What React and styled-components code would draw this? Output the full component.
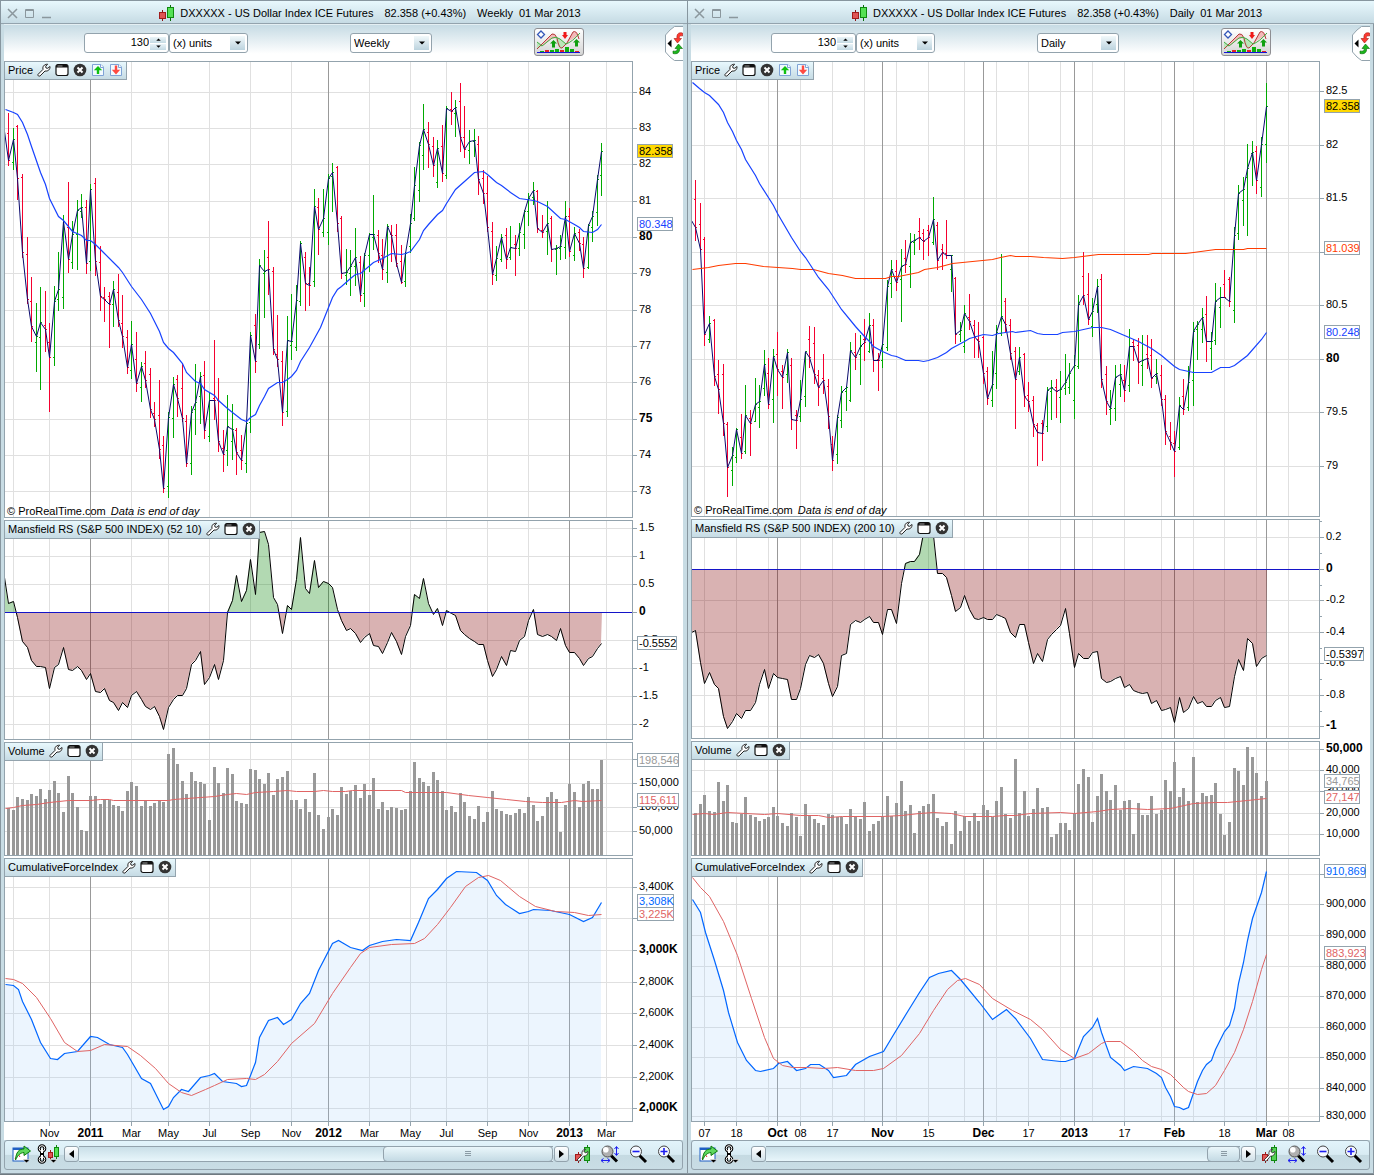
import React, { useState } from 'react';
import styled, { createGlobalStyle, css } from 'styled-components';

const font = '"Liberation Sans", Arial, Helvetica, sans-serif';
const frameDark = '#87969f';
const frameBlue = '#c8dce4';
const lineGrey = '#93a3ad';
const barTop = '#e8f8fd';
const barBottom = '#c6dbe4';
const mainBlue = '#1742ff';
const forceBlue = '#0066ff';
const avgRed = '#e06464';

/* ---------- series, all in window coordinates ---------- */

// high, low, open, close
const weeklyBars = [
  [113,165,133,160],[128,169,162,139],[125,199,126,178],[174,257,177,252],[237,303,254,299],[277,341,301,326],
  [303,371,342,336],[287,389,337,322],[291,351,325,329],[323,411,342,357],[286,365,357,301],[252,310,299,289],
  [215,308,297,221],[182,272,227,259],[221,268,262,234],[200,269,234,210],[194,217,211,207],[200,273,207,263],
  [184,270,261,189],[178,275,183,261],[246,310,262,296],[287,321,297,299],[292,347,296,304],[281,326,304,289],
  [274,326,292,320],[295,347,323,336],[330,373,337,367],[321,378,370,344],[332,391,359,383],[362,401,387,366],
  [351,387,363,380],[368,417,374,409],[402,426,413,419],[380,458,415,449],[436,492,445,488],[412,497,486,417],
  [377,437,418,384],[375,416,379,398],[363,421,388,418],[415,466,421,463],[406,474,463,412],[364,434,409,402],
  [372,423,396,376],[361,438,375,430],[392,441,436,400],[340,419,398,400],[378,451,400,441],[430,471,448,454],
  [395,465,450,426],[404,459,441,429],[428,474,430,452],[435,469,450,460],[421,472,463,423],[332,432,422,335],
  [314,372,325,361],[259,348,344,265],[250,317,273,271],[221,294,257,269],[267,354,271,349],[315,366,354,359],
  [351,425,361,412],[316,416,411,340],[294,359,345,341],[285,350,347,300],[241,305,301,243],[252,310,257,283],
  [267,305,283,285],[189,286,281,206],[198,254,207,229],[189,236,232,218],[174,244,232,178],[163,211,176,172],
  [166,231,167,223],[216,278,218,273],[249,284,275,272],[250,295,273,266],[228,285,266,257],[256,301,262,295],
  [253,306,293,255],[233,271,255,234],[195,249,237,234],[230,262,235,253],[239,279,255,269],[224,282,272,226],
  [225,261,234,235],[224,266,235,263],[245,283,261,282],[252,286,281,253],[214,252,246,223],[167,220,218,185],
  [142,201,190,145],[104,169,155,129],[122,167,132,144],[137,176,146,165],[140,187,182,148],[125,181,146,173],
  [106,178,175,108],[92,124,109,111],[100,136,113,107],[83,151,101,137],[106,157,137,149],[130,163,150,141],
  [129,156,141,140],[136,194,144,179],[170,203,178,193],[176,231,193,227],[222,284,231,274],[246,280,275,258],
  [234,261,259,237],[228,268,235,259],[226,259,257,247],[235,275,244,248],[223,255,248,232],[210,248,234,211],
  [193,225,211,198],[182,204,197,190],[190,232,191,228],[215,237,230,232],[201,254,231,223],[216,261,218,249],
  [245,274,249,248],[235,259,248,246],[201,258,247,216],[208,256,216,251],[227,260,255,233],[229,250,232,243],
  [237,277,244,268],[224,268,267,225],[211,241,227,216],[175,225,212,179],[143,195,175,151],
];

const dailyBars = [
  [180,240,199,227],[203,249,224,249],[237,345,239,334],[316,342,339,323],[319,385,320,376],[360,413,374,389],
  [364,435,374,423],[422,496,424,467],[447,485,470,455],[428,462,457,429],[414,458,437,453],[385,453,451,415],
  [410,455,418,423],[378,421,421,404],[385,427,407,401],[350,395,388,364],[358,408,373,404],[349,422,399,356],
  [332,395,354,369],[365,408,371,377],[349,382,374,352],[358,429,365,419],[410,448,415,420],[380,421,416,399],
  [352,406,396,351],[326,367,339,357],[327,383,343,374],[370,405,375,387],[354,393,378,380],[379,428,386,416],
  [436,470,444,460],[415,463,454,417],[386,427,420,392],[386,410,391,387],[342,401,400,350],[333,369,352,357],
  [335,384,354,346],[319,360,339,342],[313,352,351,325],[319,371,325,360],[353,390,359,360],[344,367,360,344],
  [280,350,347,286],[260,297,283,269],[260,290,271,282],[249,321,279,266],[240,272,258,264],[233,287,266,242],
  [234,254,242,240],[218,249,231,237],[229,259,233,241],[225,255,230,237],[197,244,242,219],[222,269,225,260],
  [244,269,249,252],[220,258,253,255],[255,291,269,255],[277,343,278,334],[322,341,334,330],[305,352,346,313],
  [294,329,317,321],[320,357,325,336],[322,357,339,341],[336,383,337,373],[367,404,371,398],[351,406,400,384],
  [325,388,373,332],[254,335,333,316],[298,332,301,324],[319,359,325,353],[347,428,351,379],[347,374,371,357],
  [353,406,354,396],[382,411,395,401],[396,436,400,424],[423,465,425,432],[420,460,423,433],[387,431,426,390],
  [380,419,391,387],[379,417,387,391],[371,422,397,389],[354,394,388,382],[363,393,387,373],[355,418,400,365],
  [295,368,366,304],[252,304,276,295],[273,324,294,319],[298,336,326,311],[279,312,304,286],[274,387,279,379],
  [366,414,374,401],[390,424,409,408],[365,420,408,377],[364,396,384,374],[365,401,380,390],[329,391,385,346],
  [339,360,342,346],[338,383,345,362],[335,385,365,360],[335,368,354,358],[339,387,355,378],[359,383,376,373],
  [365,405,375,399],[395,444,399,431],[422,449,436,442],[431,476,443,451],[397,449,447,405],[379,414,396,409],
  [366,410,407,382],[322,405,380,331],[321,359,329,324],[308,342,329,317],[296,361,314,341],[332,369,348,341],
  [283,344,340,301],[287,327,307,297],[270,297,284,297],[277,306,279,301],[227,322,310,235],[185,239,233,193],
  [177,225,200,189],[144,235,177,168],[141,185,153,152],[146,193,151,180],[137,196,187,144],[83,162,144,106],
];

// relative strength: one sample per bar, the first lies just left of bar 0
const weeklyRs = [
  577,603,601,617,641,647,660,666,666,667,688,667,664,647,669,670,666,670,679,673,691,692,688,700,702,710,702,
  707,695,691,699,706,709,706,716,729,707,699,695,695,688,664,660,651,684,677,664,679,660,612,600,575,601,590,
  559,594,532,531,544,597,604,633,605,609,579,537,588,593,560,587,581,583,587,609,620,630,628,633,642,637,633,
  645,646,653,642,632,641,654,636,625,594,598,578,603,614,608,625,610,613,615,630,634,638,641,644,644,660,676,
  669,656,665,650,651,640,636,620,609,634,636,634,636,640,628,645,652,652,658,665,658,656,648,643,
];

const dailyRs = [
  632,630,662,683,672,684,688,716,728,721,713,718,710,710,702,684,669,688,673,677,678,679,699,699,688,664,655,
  657,654,663,683,696,686,655,653,624,620,622,619,616,622,622,634,609,609,623,583,563,561,561,554,533,523,535,
  573,573,577,595,611,607,595,609,618,619,617,619,619,614,616,618,632,637,624,624,642,663,653,661,639,634,629,
  625,608,633,667,653,658,658,652,651,678,682,681,678,676,687,684,690,692,693,692,703,700,710,709,707,722,697,
  712,708,696,703,701,706,706,700,697,707,706,676,659,670,638,643,666,658,655,
];

// top edge of each volume column
const weeklyVolume = [
  808,810,797,799,800,794,796,789,799,790,781,793,812,776,793,807,830,831,796,796,804,799,800,805,806,811,791,
  782,786,806,801,806,803,801,802,754,748,764,781,794,772,781,782,784,820,767,783,793,768,774,801,803,804,769,
  770,779,784,773,795,779,777,771,800,800,809,799,812,773,815,829,817,809,815,787,794,791,785,798,784,795,778,
  809,802,810,807,808,810,809,791,762,778,782,786,772,780,791,810,806,812,793,802,816,819,806,822,812,791,809,
  811,814,815,813,809,813,797,805,821,816,797,792,799,832,805,784,792,807,784,781,789,789,760,
];

const dailyVolume = [
  813,804,795,811,812,782,801,785,822,823,814,797,815,817,821,819,817,807,816,823,826,813,817,836,804,816,819,
  823,825,814,815,817,817,824,809,817,819,802,831,824,821,817,796,816,803,781,811,805,833,811,806,804,794,818,
  826,822,844,811,831,816,821,813,821,805,810,817,801,787,814,818,759,813,791,816,809,788,808,807,837,834,823,
  823,830,814,784,769,777,822,796,774,791,800,785,810,801,800,834,803,815,815,796,814,810,780,791,762,797,788,
  801,757,802,793,796,795,783,814,835,822,768,771,785,747,757,773,796,781,
];

const weeklyAverage = '5,109 13,112 17,114 22,122 27,134 31,146 40,172 45,184 49,198 58,216 63,220 72,231 81,235 86,240 90,240 95,244 100,249 104,253 113,262 118,267 122,272 131,286 141,299 150,313 159,331 163,342 168,348 173,352 182,363 186,372 195,381 200,383 204,389 214,395 218,400 227,408 232,412 241,419 246,421 250,417 255,414 259,405 264,396 268,388 277,382 282,382 287,379 291,376 296,370 300,361 309,347 320,327 328,307 332,297 337,289 341,286 350,278 355,274 360,273 373,262 382,258 391,253 401,254 405,253 410,251 419,239 423,230 428,224 437,214 442,210 446,203 455,189 464,181 474,172 483,171 487,174 496,182 501,185 510,192 519,198 533,200 537,201 547,206 560,218 565,219 574,224 579,227 583,231 592,232 597,229 601,224';
const dailyAverage = '5,82 12,88 17,92 22,95 31,104 36,112 40,122 45,131 49,140 54,149 58,159 68,175 72,183 86,205 90,213 104,237 113,251 118,257 131,277 141,289 154,309 168,326 177,336 182,341 186,346 195,351 204,355 209,356 218,360 231,360 236,361 241,360 250,357 259,352 264,348 277,341 282,338 296,334 305,335 311,333 325,331 328,332 343,330 350,333 356,334 370,334 375,332 387,331 405,327 414,327 423,329 437,335 451,341 464,348 474,355 487,366 492,369 506,372 524,372 533,367 542,367 547,365 560,355 574,339 579,332';
const dailyLongAverage = '5,269 21,267 31,265 48,263 58,263 76,266 105,268 113,269 126,269 141,273 155,275 168,278 198,278 204,276 211,276 231,272 237,269 250,267 265,263 285,261 305,259 313,257 323,255 328,256 343,256 356,257 375,258 387,257 411,254 461,254 465,253 498,253 506,252 528,249 556,249 560,248 579,248';

const weeklyVolumeAverage = '5,808 13,807 22,805 36,804 49,802 68,800 90,800 100,799 109,799 113,800 168,800 173,799 200,797 214,796 227,794 236,793 246,794 255,792 273,791 287,790 296,791 314,791 323,790 332,791 345,791 352,790 401,790 405,792 446,792 468,795 487,797 506,799 525,801 542,802 561,802 574,800 582,801 601,800';
const dailyVolumeAverage = '5,814 17,813 26,814 40,812 58,813 77,814 90,813 113,815 131,815 141,817 155,816 178,816 195,816 214,815 232,813 246,812 264,813 277,816 305,816 318,815 328,815 343,813 373,812 387,813 410,811 423,809 442,808 460,809 483,808 506,803 528,802 540,802 560,800 579,798';

const weeklyForce = '5,984 13,985 18,989 22,1001 31,1019 40,1042 50,1058 57,1059 64,1053 77,1051 90,1036 97,1037 109,1044 122,1047 127,1054 141,1078 150,1083 163,1109 168,1106 173,1097 181,1089 188,1091 200,1077 209,1075 214,1073 222,1081 236,1083 241,1086 246,1085 250,1075 255,1062 259,1037 268,1020 277,1017 283,1024 291,1019 300,1003 309,993 318,970 332,943 338,940 350,947 362,950 369,945 382,941 396,939 410,940 418,922 428,898 437,889 446,878 456,871 476,872 487,880 496,895 505,904 519,913 528,911 533,909 550,910 569,914 583,921 592,917 601,902';
const weeklyForceAverage = '5,978 13,979 22,983 36,997 50,1018 64,1042 77,1051 90,1050 104,1044 127,1046 140,1055 155,1068 168,1083 181,1092 191,1095 205,1089 214,1085 227,1079 246,1078 255,1079 264,1074 277,1061 291,1043 314,1023 332,993 350,967 360,953 369,947 391,944 414,943 424,938 437,924 450,907 465,886 478,877 488,875 500,880 519,896 535,906 555,911 574,912 588,915 601,914';
const dailyForce = '5,899 13,912 18,932 27,960 36,990 41,1012 50,1042 59,1060 68,1070 73,1071 86,1068 91,1063 100,1061 109,1070 118,1068 123,1064 132,1064 141,1070 146,1077 159,1075 168,1064 182,1056 196,1051 205,1036 219,1013 232,992 242,977 251,973 264,970 273,979 292,1002 305,1019 319,1009 328,1018 343,1038 355,1059 373,1061 378,1061 387,1058 396,1036 405,1027 410,1018 414,1032 423,1057 433,1065 437,1070 446,1066 460,1068 469,1073 474,1077 478,1087 483,1096 487,1106 492,1107 496,1109 501,1107 510,1081 515,1070 519,1064 524,1060 528,1049 537,1031 542,1025 547,1008 551,983 556,962 560,940 565,918 574,892 579,871';
const dailyForceAverage = '5,877 13,887 22,896 36,921 50,955 64,998 77,1037 86,1058 95,1065 105,1067 120,1067 136,1068 150,1067 168,1070 186,1070 196,1068 214,1055 232,1033 246,1010 260,989 270,980 278,978 292,984 305,998 325,1010 343,1019 355,1029 373,1049 387,1058 401,1053 414,1043 419,1041 433,1041 446,1051 455,1060 464,1066 474,1069 483,1074 496,1087 501,1091 510,1094 519,1093 528,1085 537,1070 547,1052 556,1029 565,1001 574,969 579,954';

const weekly = {
  id: 'weekly',
  period: 'Weekly',
  thumb: 170,
  grid: [13, 49, 131, 168, 209, 250, 291, 369, 410, 446, 487, 528, 606],
  majorGrid: [90, 328, 569],
  dates: [[49, 'Nov'], [90, '2011', true], [131, 'Mar'], [168, 'May'], [209, 'Jul'], [250, 'Sep'], [291, 'Nov'], [328, '2012', true], [369, 'Mar'], [410, 'May'], [446, 'Jul'], [487, 'Sep'], [528, 'Nov'], [569, '2013', true], [606, 'Mar']],
  panels: [
    {
      type: 'price', title: 'Price', top: 61, height: 457, bars: weeklyBars, firstClose: 131,
      averages: [[weeklyAverage, mainBlue]],
      ticks: [[92, '84'], [128, '83'], [164, '82'], [201, '81'], [237, '80', true], [273, '79'], [310, '78'], [346, '77'], [382, '76'], [419, '75', true], [455, '74'], [491, '73']],
      tags: [[144, '82.358', '#000', 36, '#ffd800'], [217, '80.348', mainBlue, 36]],
    },
    {
      type: 'strength', title: 'Mansfield RS (S&P 500 INDEX) (52 10)', top: 520, height: 220, zero: 612, series: weeklyRs,
      ticks: [[528, '1.5'], [556, '1'], [584, '0.5'], [612, '0', true], [640, '-0.5'], [668, '-1'], [696, '-1.5'], [724, '-2']],
      tags: [[636, '-0.5552', '#000', 40]],
    },
    {
      type: 'volume', title: 'Volume', top: 742, height: 114, series: weeklyVolume, averages: [[weeklyVolumeAverage, avgRed]],
      ticks: [[759], [783, '150,000'], [807, '100,000'], [831, '50,000']],
      tags: [[753, '198,546', '#999', 42], [793, '115,611', avgRed, 42]],
    },
    {
      type: 'force', title: 'CumulativeForceIndex', top: 858, height: 264, series: weeklyForce, averages: [[weeklyForceAverage, avgRed]],
      ticks: [[887, '3,400K'], [918], [950, '3,000K', true], [982, '2,800K'], [1013, '2,600K'], [1045, '2,400K'], [1077, '2,200K'], [1108, '2,000K', true]],
      tags: [[907, '3,225K', avgRed, 37], [894, '3,308K', forceBlue, 37]],
    },
  ],
};

const daily = {
  id: 'daily',
  period: 'Daily',
  thumb: 33,
  grid: [17, 49, 81, 113, 145, 177, 209, 241, 277, 309, 341, 373, 405, 437, 474, 506, 537, 569, 601],
  majorGrid: [90, 195, 296, 387, 487, 579],
  dates: [[17, '07'], [49, '18'], [90, 'Oct', true], [113, '08'], [145, '17'], [195, 'Nov', true], [241, '15'], [296, 'Dec', true], [341, '17'], [387, '2013', true], [437, '17'], [487, 'Feb', true], [537, '18'], [579, 'Mar', true], [601, '08']],
  panels: [
    {
      type: 'price', title: 'Price', top: 61, height: 456, bars: dailyBars, firstClose: 220,
      averages: [[dailyLongAverage, '#ff3c00'], [dailyAverage, mainBlue]],
      ticks: [[91, '82.5'], [145, '82'], [198, '81.5'], [252], [305, '80.5'], [359, '80', true], [412, '79.5'], [466, '79']],
      tags: [[99, '82.358', '#000', 36, '#ffd800'], [241, '81.039', '#ff3c00', 36], [325, '80.248', mainBlue, 36]],
    },
    {
      type: 'strength', title: 'Mansfield RS (S&P 500 INDEX) (200 10)', top: 519, height: 220, zero: 569, series: dailyRs,
      ticks: [[537, '0.2'], [569, '0', true], [600, '-0.2'], [632, '-0.4'], [663, '-0.6'], [695, '-0.8'], [726, '-1', true]],
      minorTicks: [521, 553, 585, 616, 648, 679, 711],
      tags: [[647, '-0.5397', '#000', 40]],
    },
    {
      type: 'volume', title: 'Volume', top: 741, height: 115, series: dailyVolume, averages: [[dailyVolumeAverage, avgRed]],
      ticks: [[749, '50,000', true], [770, '40,000'], [791, '30,000'], [813, '20,000'], [834, '10,000']],
      tags: [[774, '34,765', '#999', 36], [790, '27,147', avgRed, 36]],
    },
    {
      type: 'force', title: 'CumulativeForceIndex', top: 858, height: 264, series: dailyForce, averages: [[dailyForceAverage, avgRed]],
      ticks: [[874], [904, '900,000'], [935, '890,000'], [966, '880,000'], [996, '870,000'], [1027, '860,000'], [1057, '850,000'], [1088, '840,000'], [1116, '830,000']],
      tags: [[864, '910,869', forceBlue, 42], [946, '883,923', avgRed, 42]],
    },
  ],
};

const barX = (i) => Math.floor(8.8 + 4.5617 * i);

/* ---------- styles ---------- */

const GlobalStyle = createGlobalStyle`
  * {
    box-sizing: border-box;
  }
  body {
    margin: 0;
    background: #6f7a80;
    color: #000;
    font-family: ${font};
    font-size: 11px;
  }
  button, input, select {
    font: inherit;
    color: inherit;
  }
`;

const Desktop = styled.main`
  display: flex;
  align-items: flex-start;
  padding-bottom: 1px;
`;

const Frame = styled.section`
  background: ${frameBlue};
  border: 1px solid ${frameDark};
  border-right-width: ${(p) => (p.$last ? '1px' : '0')};
  display: flex;
  flex: 1 1 0;
  flex-direction: column;
  min-width: 600px;
  padding: 0 ${(p) => (p.$last ? '3px' : '4px')} 3px 3px;
`;

const TitleBar = styled.header`
  align-items: center;
  background: linear-gradient(${barTop}, ${barBottom});
  border-bottom: 1px solid ${lineGrey};
  display: flex;
  height: 23px;
  margin: 0 -4px 0 -3px;
  padding: 2px 0 0 6px;
`;

const WindowButtons = styled.div`
  display: flex;
  gap: 6px;
  width: 46px;
`;

const PlainButton = styled.button`
  background: none;
  border: 0;
  cursor: pointer;
  display: block;
  line-height: 0;
  padding: 0;
`;

const Title = styled.h1`
  align-items: center;
  display: flex;
  flex: 1;
  font-size: 11px;
  font-weight: normal;
  gap: 11px;
  justify-content: center;
  margin: 0;
  white-space: nowrap;

  .name, .when {
    align-items: center;
    display: flex;
    gap: 5px;
  }
  .when {
    gap: 6px;
  }
`;

const Toolbar = styled.div`
  align-items: center;
  background: linear-gradient(#c6dbe4, #fff 80%);
  border-top: 1px solid #e4eff3;
  display: flex;
  height: 37px;
  padding-left: 80px;
`;

const fieldBox = css`
  background: #fff;
  border: 1px solid ${lineGrey};
  border-radius: 3px;
  height: 20px;
`;

const UnitField = styled.label`
  ${fieldBox}
  align-items: center;
  display: flex;
  padding-right: 2px;
  width: 85px;

  input {
    appearance: textfield;
    background: none;
    border: 0;
    flex: 1;
    height: 18px;
    min-width: 0;
    outline: 0;
    padding: 0 1px 2px 0;
    text-align: right;
  }
  input::-webkit-inner-spin-button {
    appearance: none;
    margin: 0;
  }
`;

const Spinner = styled.span`
  display: flex;
  flex-direction: column;
  gap: 1px;

  button {
    background: linear-gradient(#eaf4f8, #c3d9e3);
    height: 6px;
    width: 16px;
  }
  svg {
    display: block;
    margin: auto;
  }
`;

const SelectBox = styled.label`
  ${fieldBox}
  align-items: center;
  display: flex;
  margin-left: ${(p) => p.$gap || 0}px;
  position: relative;
  width: ${(p) => p.$width}px;

  select {
    appearance: none;
    background: none;
    border: 0;
    height: 18px;
    outline: 0;
    padding: 0 0 1px 3px;
    width: 100%;
  }
  span {
    align-items: center;
    background: linear-gradient(#f2f9fb, #bcd3de);
    display: flex;
    height: 14px;
    justify-content: center;
    pointer-events: none;
    position: absolute;
    right: 2px;
    width: 15px;
  }
`;

const IndicatorButton = styled(PlainButton)`
  background: linear-gradient(#fff, #d4d4d4);
  border: 1px solid #8e8e92;
  border-radius: 3px;
  height: 28px;
  margin: 0 0 2px 102px;
  padding: 0 1px;
  width: 50px;
`;

const DrawerTab = styled(PlainButton)`
  margin-left: auto;
`;

const Charts = styled.div`
  background: #fff;
  display: flex;
  flex-direction: column;
  gap: 2px;
`;

const PanelRow = styled.div`
  display: flex;
  height: ${(p) => p.$height}px;
`;

const Plot = styled.div`
  border: 1px solid ${lineGrey};
  flex: 1;
  min-width: 0;
  position: relative;

  > svg {
    display: block;
    height: 100%;
    width: 100%;
  }
`;

const AxisSvg = styled.svg`
  display: block;
  flex: none;
  overflow: visible;
`;

const PanelHeader = styled.div`
  align-items: center;
  background: linear-gradient(${barTop}, ${barBottom});
  border-bottom: 1px solid ${lineGrey};
  border-right: 1px solid ${lineGrey};
  display: flex;
  gap: 4px;
  height: 18px;
  left: 0;
  padding: 0 3px 1px;
  position: absolute;
  top: 0;
  white-space: nowrap;
`;

const Credit = styled.p`
  bottom: 0;
  left: 2px;
  margin: 0;
  position: absolute;

  em {
    margin-left: 2px;
  }
`;

const DateRow = styled.div`
  background: #fff;
  height: 18px;
  padding: 0 51px 0 1px;

  svg {
    display: block;
    overflow: visible;
  }
`;

const BottomBar = styled.footer`
  align-items: center;
  background: linear-gradient(#e2f4fb, #d8ebf3 48%, #c5dae2 50%, #c9dde5);
  border: 1px solid ${lineGrey};
  border-radius: 3px;
  display: flex;
  height: 30px;
  padding: 0 7px 2px;
`;

const ScrollButton = styled(PlainButton)`
  align-items: center;
  background: linear-gradient(#fff, #cfe0e8);
  border: 1px solid ${lineGrey};
  border-radius: 3px;
  display: flex;
  height: 16px;
  justify-content: center;
  width: 15px;
`;

const ScrollTrack = styled.div`
  background: linear-gradient(#c9dfe8, #e8f6fb);
  border: 1px solid ${lineGrey};
  border-width: 1px 0;
  display: flex;
  flex: 1;
  height: 16px;
  justify-content: flex-end;
  margin-right: 1px;
`;

const ScrollThumb = styled.button`
  align-items: center;
  background: linear-gradient(#eaf7fb, #c4dae4);
  border: 1px solid ${lineGrey};
  border-radius: 4px;
  display: flex;
  height: 16px;
  justify-content: center;
  margin: -1px 0;
  padding: 0;
  width: ${(p) => p.$width}px;
`;

const ToolGroup = styled.div`
  align-items: center;
  display: flex;
  gap: ${(p) => p.$gap}px;
  margin: ${(p) => p.$margin};
`;

/* ---------- icons ---------- */

const Caret = ({ up, small }) => (
  <svg width={small ? 5 : 6} height={small ? 3 : 4} viewBox="0 0 6 4">
    <path d={up ? 'M0 3.5h6L3 .5z' : 'M0 .5h6L3 3.5z'} fill="#000" />
  </svg>
);

const Candles = () => (
  <svg width="16" height="16" viewBox="0 0 16 16">
    <path d="M3.5 5v11" stroke="#8c1414" />
    <rect x=".5" y="7.5" width="6" height="6" fill="#e05555" stroke="#a01c1c" />
    <path d="M11.500 0v16" stroke="#0a6b0a" />
    <rect x="8.500" y="2.500" width="6" height="10" fill="#55e055" stroke="#0f8a0f" />
  </svg>
);

const Wrench = () => (
  <svg width="14" height="14" viewBox="0 0 14 14">
    <path
      d="M1 11.400 6 6.400C5.400 4.400 6.300 1.800 9.400 1.300L10.600 1.200 8.700 3.300 9 5 10.700 5.300 13 3.500C13.300 6.200 11.200 8.600 8 8L3.100 12.900C1.900 13.700.3 12.500 1 11.400Z"
      fill="#fff" stroke="#222" strokeLinejoin="round"
    />
  </svg>
);

const Maximise = () => (
  <svg width="14" height="14" viewBox="0 0 14 14">
    <rect x="1" y="1.500" width="12" height="11" rx="2" fill="#fff" stroke="#111" strokeWidth="1.200" />
    <path d="M1 4.500V3.500Q1 1.500 3 1.500H11Q13 1.500 13 3.500V4.500Z" fill="#111" />
    <path d="M2.500 3h5" stroke="#999" />
  </svg>
);

const Close = () => (
  <svg width="14" height="14" viewBox="0 0 14 14">
    <circle cx="7" cy="7" r="6.300" fill="#333" />
    <path d="M4.500 4.500l5 5M9.500 4.500l-5 5" stroke="#fff" strokeWidth="2" />
  </svg>
);

const MoveIcon = ({ down }) => (
  <svg width="14" height="14" viewBox="0 0 14 14">
    <path d="M1.500 1.500H10L12.500 4V12.500H1.500Z" fill="#f2faff" stroke="#7fa3d6" />
    <path d="M9.500 1.500V4.500H12.500" fill="#fff" stroke="#7fa3d6" />
    {down
      ? <path d="M5.800 2.500h2.400v4.300h3L7 11.500 2.800 6.800h3z" fill="#ff4a42" />
      : <path d="M7 3l4.200 4.200h-3V11H5.800V7.200h-3z" fill="#10c010" />}
  </svg>
);

const IndicatorIcon = () => (
  <svg width="46" height="26" viewBox="0 0 46 26">
    <path d="M4 18L16 5Q19 4 21 9L15 10L8 16ZM30 14L37 3Q40 1 43 7L38 9Z" fill="#f2b9b9" />
    <path d="M1 13V20L6 17ZM19 8L24 10 30 15 25 20Q22 19 19 8Z" fill="#b9e6b9" />
    <path d="M1 20L16 5Q19 4 21 9Q23 20 26 19L31 14 37 3Q40 1 42 7L43 10" fill="none" stroke="#b53a3a" />
    <path d="M1 13L6 17 16 9Q20 7 24 10L30 15Q36 13 44 4" fill="none" stroke="#3fae3f" />
    <path d="M5 2l3.500 3.500L5 9 1.500 5.500z" fill="#fff" stroke="#3457b8" strokeWidth="1.300" />
    <path d="M27.500 3h3v3h1.500l-3 4-3-4h1.500z" fill="#f01818" />
    <path d="M17.500 11l3.500 3.500h-2v4h-3v-4h-2zM40.500 10l3.500 3.500h-2v4h-3v-4h-2z" fill="#0fa00f" />
    <path d="M4 23h4v-1H4zM14 23h4v-2h-4zM19 23h4v-3h-4zM29 23h4v-5h-4zM34 23h4v-3h-4z" fill="#0fb00f" />
    <path d="M9 23h4v-2H9zM24 23h4v-2h-4zM39 23h4v-1h-4z" fill="#e02424" />
    <path d="M1 23.500h43" stroke="#1414d8" />
  </svg>
);

const DrawerIcon = () => (
  <svg width="18" height="35" viewBox="0 0 18 35">
    <path d="M18 .5H9.500L5 4 .5 9V26L5 31 9.500 34.500H18" fill="#fff" stroke={lineGrey} />
    <path d="M6.500 13.500v8L2.500 17.500z" fill="#000" />
    <path d="M17.500 7C13 6 11.500 8.500 12 12.500H9L12.500 17 16.500 12.500H14.300C14 10 15 9.500 17.500 10Z" fill="#ff3a30" stroke="#a31a14" strokeWidth=".6" />
    <path d="M8 27.500C12.500 28.500 15 26.500 14.500 22.500H17.500L13.500 18 10 22.500H12.200C12.500 25 11 25.500 8 25Z" fill="#1cb81c" stroke="#0a650a" strokeWidth=".6" />
  </svg>
);

const ShareIcon = () => (
  <svg width="19" height="20" viewBox="0 0 19 20">
    <rect x="1" y="4" width="15" height="13" fill="#fff" stroke="#1f5fc4" />
    <path d="M1 4h15v2H1z" fill="#1f5fc4" />
    <path d="M3 15l3-5 2 3" fill="none" stroke="#d93030" />
    <path d="M3.500 16C4 8 7 5 12 5V2L18.500 7 12 11.500V8.500C8 9 6 11 3.500 16Z" fill="#5fd85f" stroke="#0f7d0f" />
    <path d="M11 15.500h7l-3.500 3.500z" fill="#000" stroke="#fff" strokeWidth=".6" />
  </svg>
);

const ChainShape = () => (
  <g fill="none">
    <g stroke="#000" strokeWidth="3">
      <circle cx="5" cy="4.500" r="2.800" />
      <circle cx="5" cy="15.500" r="2.800" />
      <path d="M5 5v10" strokeWidth="4" />
    </g>
    <g stroke="#fff">
      <circle cx="5" cy="4.500" r="2.800" />
      <circle cx="5" cy="15.500" r="2.800" />
      <path d="M5 5v10" strokeWidth="2" strokeDasharray="4 2" />
    </g>
  </g>
);

const LinkIcon = ({ candles }) => (
  <svg width={candles ? 23 : 16} height="20" viewBox={candles ? '0 0 23 20' : '0 0 16 20'}>
    <ChainShape />
    {candles && (
      <g>
        <path d="M13.500 6v10" stroke="#a01c1c" />
        <rect x="11.500" y="8.500" width="4" height="5" fill="#e05555" stroke="#a01c1c" />
        <path d="M19.500 1v14" stroke="#0f8a0f" />
        <rect x="17.500" y="3.500" width="4" height="9" fill="#55e055" stroke="#0f8a0f" />
      </g>
    )}
    <path d={candles ? 'M13 15.500h7l-3.500 3.500z' : 'M8 15.500h7l-3.500 3.500z'} fill="#000" stroke="#fff" strokeWidth=".6" />
  </svg>
);

const SettingsIcon = () => (
  <svg width="16" height="20" viewBox="0 0 16 20">
    <path d="M12.500 1v18" stroke="#0f8a0f" />
    <rect x="9.500" y="3.500" width="5" height="13" fill="#55d055" stroke="#0f8a0f" />
    <path d="M3.500 8v11" stroke="#a01c1c" />
    <rect x=".5" y="10.500" width="5" height="6" fill="#e05555" stroke="#a01c1c" />
    <path d="M2 16L7 11C6.500 8 7.500 5.500 10.500 5L9 7.500 10.500 9 13 7.500C13 10.500 11 12.500 8.500 12L4 17.500Z" fill="#fff" stroke="#222" strokeWidth=".8" />
  </svg>
);

const ZoomIcon = ({ sign }) => (
  <svg width="19" height="20" viewBox="0 0 19 20">
    <path d="M10.500 11.500L17 18" stroke="#000" strokeWidth="3" />
    <circle cx="7" cy="7.500" r="5.500" fill="#f4f8ff" stroke="#444" />
    <path d={sign === 'in' ? 'M3.500 7.500h7M7 4v7' : 'M3.500 7.500h7'} stroke="#1c1cf0" strokeWidth="1.600" />
  </svg>
);

const FitIcon = () => (
  <svg width="20" height="20" viewBox="0 0 20 20">
    <path d="M10.500 11l6.500 6.500" stroke="#000" strokeWidth="3" />
    <circle cx="7.500" cy="7.500" r="5.500" fill="#b0b0b0" stroke="#555" />
    <circle cx="5.800" cy="5.800" r="2.800" fill="#fff" />
    <path d="M16.500 3v8M14.500 5l2-2.500 2 2.500M14.500 9l2 2.500 2-2.500M1.500 16.500h8M3.500 14.500l-2.500 2 2.500 2M7.500 14.500l2.500 2-2.500 2" fill="none" stroke="#1c1cf0" />
  </svg>
);

/* ---------- chart drawing ---------- */

const Grid = ({ chart, panel }) => {
  const { top, height } = panel;
  return (
    <g shapeRendering="crispEdges">
      {panel.ticks.map(([y]) => <path key={y} d={`M5 ${y + 0.5}H632`} stroke="#e0e0e0" />)}
      {chart.grid.map((x) => <path key={x} d={`M${x + 0.5} ${top}v${height}`} stroke="#e0e0e0" />)}
      {chart.majorGrid.map((x) => <path key={x} d={`M${x + 0.5} ${top}v${height}`} stroke="#999" />)}
    </g>
  );
};

const Line = ({ points, color, width = 1 }) => (
  <polyline points={points} fill="none" stroke={color} strokeWidth={width} transform="translate(0.5 0.5)" vectorEffect="non-scaling-stroke" />
);

const PriceSeries = ({ panel }) => {
  const closes = panel.bars.map(([, , , c], i) => `${barX(i)},${c}`).join(' ');
  const draw = (up) => panel.bars
    .map(([h, l, o, c], i) => {
      if ((c <= o) !== up) return '';
      const x = barX(i);
      return `M${x} ${h}h1V${l + 1}h-1zM${x - 1} ${o}h1v1h-1zM${x + 1} ${c}h1v1h-1z`;
    })
    .join('');
  return (
    <g>
      <g shapeRendering="crispEdges">
        <path d={draw(true)} fill="#00aa00" />
        <path d={draw(false)} fill="#f5002f" />
      </g>
      <Line points={`4,${panel.firstClose} ${closes}`} color="#0a0a6e" />
      {panel.averages.map(([points, color]) => <Line key={color} points={points} color={color} width={1.2} />)}
    </g>
  );
};

const StrengthSeries = ({ chart, panel }) => {
  const points = panel.series.map((y, i) => `${barX(i - 1)},${y}`).join(' ');
  const lastX = barX(panel.series.length - 2) + 1;
  const area = `${barX(-1)},${panel.zero} ${points} ${lastX},${panel.zero}`;
  const bottom = panel.top + panel.height;
  return (
    <g>
      <clipPath id={`${chart.id}-above`}><rect x="0" y={panel.top} width="632" height={panel.zero - panel.top} /></clipPath>
      <clipPath id={`${chart.id}-below`}><rect x="0" y={panel.zero} width="632" height={bottom - panel.zero} /></clipPath>
      <polygon points={area} fill="#008000" fillOpacity=".3" clipPath={`url(#${chart.id}-above)`} />
      <polygon points={area} fill="#800000" fillOpacity=".3" clipPath={`url(#${chart.id}-below)`} />
      <Line points={points} color="#000" />
      <path d={`M5 ${panel.zero + 0.5}H632`} stroke="#1414c8" shapeRendering="crispEdges" />
    </g>
  );
};

const VolumeSeries = ({ panel }) => (
  <g>
    <path
      d={panel.series.map((y, i) => `M${barX(i) - 1} ${y}h3V856h-3z`).join('')}
      fill="#999"
      shapeRendering="crispEdges"
    />
    {panel.averages.map(([points, color]) => <Line key={color} points={points} color={color} />)}
  </g>
);

const ForceSeries = ({ panel }) => {
  const lastX = panel.series.split(' ').pop().split(',')[0];
  return (
    <g>
      <polygon points={`5,1122 ${panel.series} ${lastX},1122`} fill="#9fcff8" fillOpacity=".2" />
      <Line points={panel.series} color={forceBlue} width={1.2} />
      {panel.averages.map(([points, color]) => <Line key={color} points={points} color={color} />)}
    </g>
  );
};

const seriesTypes = {
  price: PriceSeries,
  strength: StrengthSeries,
  volume: VolumeSeries,
  force: ForceSeries,
};

const Axis = ({ panel }) => (
  <AxisSvg width="50" height={panel.height} viewBox={`633 ${panel.top} 50 ${panel.height}`}>
    {panel.ticks.map(([y, label, strong]) => (
      <g key={y}>
        <path d={`M633 ${y + 0.5}h4`} stroke={lineGrey} />
        {label && <text x="639" y={y + 3} fontSize={strong ? 12 : 11} fontWeight={strong ? 'bold' : 'normal'}>{label}</text>}
      </g>
    ))}
    {(panel.minorTicks || []).map((y) => <path key={y} d={`M633 ${y + 0.5}h2`} stroke={lineGrey} />)}
    {panel.tags.map(([y, label, color, width, fill]) => (
      <g key={label}>
        <rect x="637.500" y={y + 0.5} width={width - 1} height="13" fill={fill || '#fff'} stroke={lineGrey} />
        <text x="639" y={y + 11} fontSize="11" fill={color}>{label}</text>
      </g>
    ))}
  </AxisSvg>
);

const Panel = ({ chart, panel }) => {
  const Series = seriesTypes[panel.type];
  return (
    <PanelRow $height={panel.height}>
      <Plot>
        <svg viewBox={`5 ${panel.top + 1} 627 ${panel.height - 2}`} preserveAspectRatio="none" role="img" aria-label={panel.title}>
          <Grid chart={chart} panel={panel} />
          <Series chart={chart} panel={panel} />
        </svg>
        <PanelHeader>
          <span>{panel.title}</span>
          <PlainButton type="button" aria-label="Settings"><Wrench /></PlainButton>
          <PlainButton type="button" aria-label="Maximise"><Maximise /></PlainButton>
          <PlainButton type="button" aria-label="Close"><Close /></PlainButton>
          {panel.type === 'price' && (
            <>
              <PlainButton type="button" aria-label="Move up"><MoveIcon /></PlainButton>
              <PlainButton type="button" aria-label="Move down"><MoveIcon down /></PlainButton>
            </>
          )}
        </PanelHeader>
        {panel.type === 'price' && <Credit>© ProRealTime.com <em>Data is end of day</em></Credit>}
      </Plot>
      <Axis panel={panel} />
    </PanelRow>
  );
};

const ChartWindow = ({ chart, last }) => {
  const [units, setUnits] = useState(130);
  const [period, setPeriod] = useState(chart.period);

  return (
    <Frame $last={last}>
      <TitleBar>
        <WindowButtons>
          <PlainButton type="button" aria-label="Close window">
            <svg width="11" height="11" viewBox="0 0 11 11"><path d="M1 1l9 9M10 1l-9 9" stroke="#8b979d" strokeWidth="1.500" /></svg>
          </PlainButton>
          <PlainButton type="button" aria-label="Maximise window">
            <svg width="11" height="11" viewBox="0 0 11 11"><path d="M1.500 1.500h8v8h-8zM1 2.500h9" fill="none" stroke="#8b979d" /></svg>
          </PlainButton>
          <PlainButton type="button" aria-label="Minimise window">
            <svg width="11" height="11" viewBox="0 0 11 11"><path d="M1 9.500h9" stroke="#8b979d" strokeWidth="1.500" /></svg>
          </PlainButton>
        </WindowButtons>
        <Title>
          <span className="name"><Candles />DXXXXX - US Dollar Index ICE Futures</span>
          <span>82.358 (+0.43%)</span>
          <span className="when"><span>{chart.period}</span><span>01 Mar 2013</span></span>
        </Title>
      </TitleBar>

      <Toolbar>
        <UnitField>
          <input type="number" aria-label="Number of units" value={units} onChange={(e) => setUnits(Number(e.target.value))} />
          <Spinner>
            <PlainButton type="button" aria-label="More" onClick={() => setUnits(units + 1)}><Caret up small /></PlainButton>
            <PlainButton type="button" aria-label="Fewer" onClick={() => setUnits(units - 1)}><Caret small /></PlainButton>
          </Spinner>
        </UnitField>
        <SelectBox $width={79}>
          <select aria-label="Unit type" defaultValue="(x) units">
            <option>(x) units</option>
            <option>days</option>
          </select>
          <span><Caret /></span>
        </SelectBox>
        <SelectBox $width={82} $gap={102}>
          <select aria-label="Period" value={period} onChange={(e) => setPeriod(e.target.value)}>
            <option>Daily</option>
            <option>Weekly</option>
            <option>Monthly</option>
          </select>
          <span><Caret /></span>
        </SelectBox>
        <IndicatorButton type="button" aria-label="Indicators"><IndicatorIcon /></IndicatorButton>
        <DrawerTab type="button" aria-label="Open trading drawer"><DrawerIcon /></DrawerTab>
      </Toolbar>

      <Charts>
        {chart.panels.map((panel) => <Panel key={panel.title} chart={chart} panel={panel} />)}
      </Charts>

      <DateRow>
        <svg width="100%" height="18">
          {chart.dates.map(([x, label, strong]) => {
            const pos = `${((x - 4.5) / 627) * 100}%`;
            return (
              <g key={x}>
                <line x1={pos} x2={pos} y1="0" y2="4" stroke={lineGrey} />
                <text x={pos} y="15" textAnchor="middle" fontSize={strong ? 12 : 11} fontWeight={strong ? 'bold' : 'normal'}>{label}</text>
              </g>
            );
          })}
        </svg>
      </DateRow>

      <BottomBar>
        <ToolGroup $gap={6} $margin={chart.id === 'weekly' ? '0 4px 0 0' : '0 11px 0 0'}>
          <PlainButton type="button" aria-label="Share"><ShareIcon /></PlainButton>
          <PlainButton type="button" aria-label="Link windows"><LinkIcon candles={chart.id === 'weekly'} /></PlainButton>
        </ToolGroup>
        <ScrollButton type="button" aria-label="Scroll left"><svg width="5" height="8"><path d="M5 0v8L0 4z" /></svg></ScrollButton>
        <ScrollTrack>
          <ScrollThumb type="button" aria-label="Scroll position" $width={chart.thumb}>
            <svg width="6" height="6"><path d="M0 .5h6M0 2.500h6M0 4.500h6" stroke="#8b9ba5" /></svg>
          </ScrollThumb>
        </ScrollTrack>
        <ScrollButton type="button" aria-label="Scroll right"><svg width="5" height="8"><path d="M0 0v8l5-4z" /></svg></ScrollButton>
        <ToolGroup $gap={9} $margin="0 -1px 0 6px">
          <PlainButton type="button" aria-label="Chart settings"><SettingsIcon /></PlainButton>
          <PlainButton type="button" aria-label="Fit to window"><FitIcon /></PlainButton>
          <PlainButton type="button" aria-label="Zoom out"><ZoomIcon sign="out" /></PlainButton>
          <PlainButton type="button" aria-label="Zoom in"><ZoomIcon sign="in" /></PlainButton>
        </ToolGroup>
      </BottomBar>
    </Frame>
  );
};

const App = () => (
  <>
    <GlobalStyle />
    <Desktop>
      <ChartWindow chart={weekly} />
      <ChartWindow chart={daily} last />
    </Desktop>
  </>
);

export default App;
